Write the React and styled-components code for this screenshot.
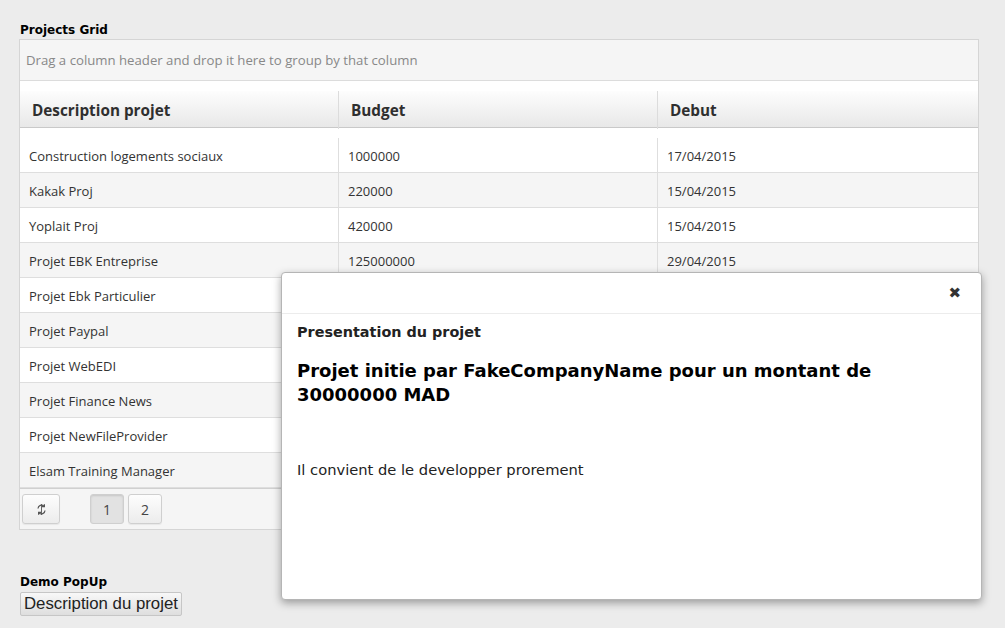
import React from 'react'
import styled, { createGlobalStyle } from 'styled-components'

const rows = [
  { desc: 'Construction logements sociaux', budget: '1000000', debut: '17/04/2015' },
  { desc: 'Kakak Proj', budget: '220000', debut: '15/04/2015' },
  { desc: 'Yoplait Proj', budget: '420000', debut: '15/04/2015' },
  { desc: 'Projet EBK Entreprise', budget: '125000000', debut: '29/04/2015' },
  { desc: 'Projet Ebk Particulier', budget: '', debut: '' },
  { desc: 'Projet Paypal', budget: '', debut: '' },
  { desc: 'Projet WebEDI', budget: '', debut: '' },
  { desc: 'Projet Finance News', budget: '', debut: '' },
  { desc: 'Projet NewFileProvider', budget: '', debut: '' },
  { desc: 'Elsam Training Manager', budget: '', debut: '' },
]

const GlobalStyle = createGlobalStyle`
  html, body {
    margin: 0;
    padding: 0;
    background: #ececec;
    height: 100%;
    overflow: hidden;
  }
`

const Page = styled.div`
  position: relative;
  width: 1005px;
  height: 628px;
  padding: 22px 26px 0 19px;
  box-sizing: border-box;
`

const SectionTitle = styled.div`
  font-family: Tahoma, "DejaVu Sans", sans-serif;
  font-weight: bold;
  font-size: 12px;
  color: #000;
  line-height: 16px;
  padding-left: 1px;
  margin-bottom: 1px;
`

const Grid = styled.div`
  border: 1px solid #d5d5d5;
  background: #fff;
  font-family: "Open Sans", sans-serif;
  width: 960px;
  box-sizing: border-box;
`

const GroupPanel = styled.div`
  background: #f5f5f5;
  color: #888;
  font-size: 13.2px;
  height: 40px;
  line-height: 41px;
  padding-left: 6px;
  border-bottom: 1px solid #dcdcdc;
`

const HeaderRow = styled.div`
  display: grid;
  grid-template-columns: 318px 319px 1fr;
  margin-top: 10px;
  height: 36px;
  background: linear-gradient(#fdfdfd, #e8e8e8);
  border-bottom: 1px solid #c9c9c9;
`

const HeaderCell = styled.div`
  font-weight: bold;
  font-size: 15.3px;
  color: #2f2f2f;
  line-height: 38px;
  padding-left: 12px;
  border-left: ${({ first }) => (first ? 'none' : '1px solid #dcdcdc')};
`

const Body = styled.div`
  padding-top: 10px;
`

const Row = styled.div`
  display: grid;
  grid-template-columns: 318px 319px 1fr;
  height: 35px;
  background: ${({ alt }) => (alt ? '#f5f5f5' : '#fff')};
  border-bottom: 1px solid #dedede;
  box-sizing: border-box;
`

const Cell = styled.div`
  font-size: 13px;
  color: #333;
  line-height: 36px;
  padding-left: 9px;
  border-left: ${({ first }) => (first ? 'none' : '1px solid #dedede')};
  white-space: nowrap;
`

const Pager = styled.div`
  display: flex;
  align-items: center;
  height: 40px;
  background: #f5f5f5;
  border-top: 1px solid #d0d0d0;
  padding-left: 2px;
`

const PagerButton = styled.div`
  width: ${({ wide }) => (wide ? '38px' : '34px')};
  height: 30px;
  margin-right: ${({ gap }) => gap || '4px'};
  border: 1px solid #cfcfcf;
  border-radius: 3px;
  box-sizing: border-box;
  display: flex;
  align-items: center;
  justify-content: center;
  font-size: 14px;
  color: #444;
  background: ${({ active }) => (active ? '#e2e2e2' : 'linear-gradient(#fdfdfd, #ececec)')};
  box-shadow: ${({ active }) => (active ? 'inset 0 1px 2px rgba(0,0,0,0.12)' : '0 1px 1px rgba(0,0,0,0.06)')};
`

const DemoBlock = styled.div`
  margin-top: 44px;
`

const DemoButton = styled.button`
  font-family: "Liberation Sans", Arial, sans-serif;
  font-size: 16.8px;
  color: #222;
  padding: 0 3px;
  height: 24px;
  border: 1px solid #c6c6c6;
  border-radius: 2px;
  background: linear-gradient(#f8f8f8, #dedede);
  margin-top: 1px;
  margin-left: 1px;
`

const Modal = styled.div`
  position: absolute;
  left: 281px;
  top: 272px;
  width: 701px;
  height: 328px;
  background: #fff;
  border: 1px solid #b5b5b5;
  border-radius: 4px;
  box-shadow: 0 3px 8px rgba(0, 0, 0, 0.35);
  box-sizing: border-box;
  font-family: "DejaVu Sans", Verdana, sans-serif;
`

const ModalHeader = styled.div`
  height: 40px;
  border-bottom: 1px solid #ececec;
  display: flex;
  justify-content: flex-end;
  align-items: center;
  padding-right: 20px;
`

const Close = styled.span`
  font-size: 15px;
  font-weight: bold;
  color: #333;
`

const ModalBody = styled.div`
  padding: 8px 14px 0 15px;
`

const ModalTitle = styled.div`
  font-weight: bold;
  font-size: 14.4px;
  color: #222;
  line-height: 20px;
`

const ModalHeading = styled.h3`
  font-size: 18px;
  font-weight: bold;
  color: #000;
  line-height: 24px;
  margin: 17px 0 0 0;
  max-width: 600px;
`

const ModalText = styled.p`
  font-size: 14.7px;
  color: #222;
  margin: 54px 0 0 0;
`

const RefreshIcon = () => (
  <svg width="11" height="13" viewBox="0 0 11 13" fill="none" stroke="#555" strokeWidth="1.2">
    <path d="M2 5.5a3.5 3.5 0 0 1 6-2.3" />
    <path d="M9 7.5a3.5 3.5 0 0 1-6 2.3" />
    <path d="M8.4 1.2v2.4H6" />
    <path d="M2.6 11.8V9.4H5" />
    <path d="M5.5 1v11" strokeWidth="0.9" />
  </svg>
)

const App = () => (
  <Page>
    <GlobalStyle />
    <SectionTitle>Projects Grid</SectionTitle>
    <Grid>
      <GroupPanel>Drag a column header and drop it here to group by that column</GroupPanel>
      <HeaderRow>
        <HeaderCell first>Description projet</HeaderCell>
        <HeaderCell>Budget</HeaderCell>
        <HeaderCell>Debut</HeaderCell>
      </HeaderRow>
      <Body>
        {rows.map((r, i) => (
          <Row key={i} alt={i % 2 === 1}>
            <Cell first>{r.desc}</Cell>
            <Cell>{r.budget}</Cell>
            <Cell>{r.debut}</Cell>
          </Row>
        ))}
      </Body>
      <Pager>
        <PagerButton wide gap="30px"><RefreshIcon /></PagerButton>
        <PagerButton active>1</PagerButton>
        <PagerButton>2</PagerButton>
      </Pager>
    </Grid>
    <DemoBlock>
      <SectionTitle>Demo PopUp</SectionTitle>
      <DemoButton>Description du projet</DemoButton>
    </DemoBlock>
    <Modal>
      <ModalHeader>
        <Close>✖</Close>
      </ModalHeader>
      <ModalBody>
        <ModalTitle>Presentation du projet</ModalTitle>
        <ModalHeading>Projet initie par FakeCompanyName pour un montant de 30000000 MAD</ModalHeading>
        <ModalText>Il convient de le developper prorement</ModalText>
      </ModalBody>
    </Modal>
  </Page>
)

export default App
